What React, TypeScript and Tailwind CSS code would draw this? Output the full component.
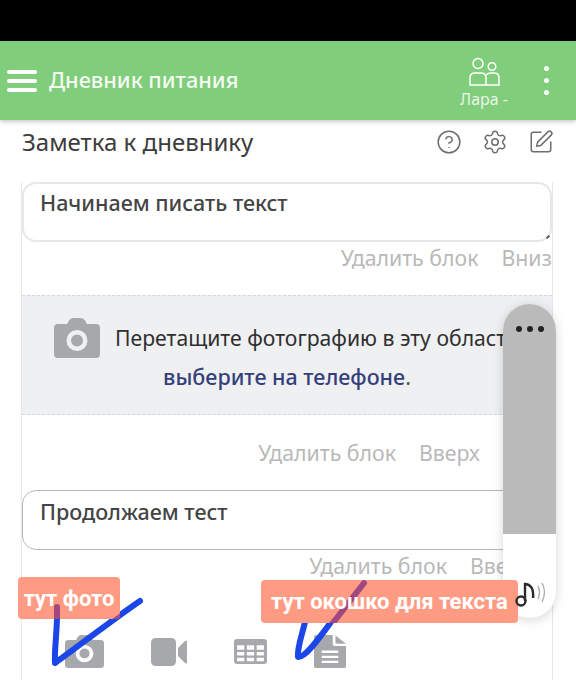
import React from "react"
import { CircleHelp, Settings, SquarePen } from "lucide-react"

function CameraIcon({ className }: { className?: string }) {
	return (
		<svg viewBox="0 0 46 40" className={className} fill="#a6a8ab" preserveAspectRatio="none">
			<path fillRule="evenodd" d="M4 6h9l2-3.500Q16.500 0 19 0h8q2.500 0 4 2.500L33 6h9q4 0 4 4v26q0 4-4 4H4q-4 0-4-4V10q0-4 4-4zM23 12a10.500 10.500 0 1 0 0 21a10.500 10.500 0 0 0 0-21zM23 16.500a6 6 0 1 1 0 12a6 6 0 0 1 0-12z" />
		</svg>
	)
}

function VideoIcon() {
	return (
		<svg viewBox="0 0 36 28" className="h-[28px] w-[36px]" fill="#a6a8ab">
			<path d="M5 0h15q5 0 5 5v18q0 5-5 5H5q-5 0-5-5V5q0-5 5-5z" />
			<path d="M27 10L34 3q2-1.500 2 1v20q0 2.500-2 1l-7-7z" />
		</svg>
	)
}

function TableIcon() {
	return (
		<svg viewBox="0 0 32 28" className="h-[25px] w-[33px]" fill="#a6a8ab" preserveAspectRatio="none">
			<path fillRule="evenodd" d="M3 0h26q3 0 3 3v22q0 3-3 3H3q-3 0-3-3V3q0-3 3-3zM3 7v5h7V7zM12.500 7v5h7V7zM22 7v5h7V7zM3 14.500v4h7v-4zM12.500 14.500v4h7v-4zM22 14.500v4h7v-4zM3 21v4h7v-4zM12.500 21v4h7v-4zM22 21v4h7v-4z" />
		</svg>
	)
}

function FileIcon() {
	return (
		<svg viewBox="0 0 29 36" className="h-[33px] w-[32px]" fill="#a6a8ab" preserveAspectRatio="none">
			<path fillRule="evenodd" d="M2 0h15v10q0 2 2 2h10v22q0 2-2 2H2q-2 0-2-2V2q0-2 2-2zM7 17v2.500h15V17zM7 22.500V25h15v-2.500zM7 28v2.500h15V28z" />
			<path d="M19.500 0.500L29 9.500h-8q-1.500 0-1.500-1.500z" />
		</svg>
	)
}

function PeopleIcon() {
	return (
		<svg viewBox="0 0 32 30" className="h-[30px] w-[32px]" fill="none" stroke="white" strokeWidth="1.500">
			<circle cx="10" cy="6.500" r="5" />
			<circle cx="24" cy="9.500" r="3.800" />
			<path d="M2 28V21q0-5 5-5h6q5 0 5 5v7z" />
			<path d="M18 18q2-2 5-2h3q5 0 5 5v7H18" />
		</svg>
	)
}

function Actions({ second, className }: { second: string; className?: string }) {
	return (
		<div className={"flex justify-end gap-[23px] whitespace-nowrap text-[21.3px] leading-[28px] text-[#b9b9b9] " + (className ?? "")}>
			<span>Удалить блок</span>
			<span>{second}</span>
		</div>
	)
}

export default function App() {
	return (
		<div className="relative h-[680px] w-[576px] overflow-hidden bg-white font-['Noto_Sans','Open_Sans',sans-serif]">
			<div className="h-[41px] bg-black" />
			<header className="relative z-10 flex h-[79px] items-center bg-[#80cd7b] pl-[7px] pr-[27px] text-white shadow-[0_2px_4px_rgba(0,0,0,0.2)]">
				<div className="flex w-[30px] flex-col gap-[5px]">
					<span className="h-[4px] rounded-full bg-white" />
					<span className="h-[4px] rounded-full bg-white" />
					<span className="h-[4px] rounded-full bg-white" />
				</div>
				<h1 className="ml-[12px] text-[21.7px] font-medium text-[#f4fbf3]">Дневник питания</h1>
				<div className="ml-auto flex w-[50px] flex-col items-center pt-[6px]">
					<PeopleIcon />
					<span className="whitespace-nowrap text-[16px] leading-[24px] text-[#eaf6e9]">Лара -</span>
				</div>
				<div className="ml-[35px] flex flex-col gap-[7px]">
					<span className="h-[5px] w-[5px] rounded-full bg-white" />
					<span className="h-[5px] w-[5px] rounded-full bg-white" />
					<span className="h-[5px] w-[5px] rounded-full bg-white" />
				</div>
			</header>
			<div className="flex h-[46px] items-center pb-[2px] pl-[22px] pr-[22px]">
				<h2 className="text-[24px] text-[#3c3c3c]">Заметка к дневнику</h2>
				<div className="ml-auto flex items-center gap-[20px] text-[#6f6f6f]">
					<CircleHelp className="h-[26px] w-[26px]" strokeWidth={1.4} />
					<Settings className="h-[26px] w-[26px]" strokeWidth={1.4} />
					<SquarePen className="h-[26px] w-[26px]" strokeWidth={1.4} />
				</div>
			</div>
			<main className="ml-[21px] mt-[16px] h-[600px] w-[532px] overflow-hidden border-x border-[#e4e6ec]">
				<div className="relative h-[60px] rounded-[14px] border-2 border-[#e6e7e9] bg-white px-[16px] pt-[3px] text-[21.5px] font-medium text-[#444]">
					Начинаем писать текст
					<span className="absolute bottom-[1px] right-[1px] h-[4px] w-[2px] rotate-45 bg-[#555]" />
				</div>
				<Actions second="Вниз" className="mt-[2px]" />
				<section className="mt-[23px] h-[120px] border-y border-dashed border-[#d5d6d9] bg-[#eff0f2] pt-[22px] text-[21.2px]">
					<div className="flex items-center whitespace-nowrap pl-[32px] text-[#2f2f2f]">
						<CameraIcon className="h-[40px] w-[46px]" />
						<span className="ml-[15px]">Перетащите фотографию в эту область</span>
					</div>
					<p className="mt-[2px] text-center text-[21.5px] leading-[34px] font-medium text-[#35407b]">
						выберите на телефоне<span className="font-normal text-[#555]">.</span>
					</p>
				</section>
				<Actions second="Вверх" className="mt-[24px] pr-[72px]" />
				<div className="mt-[23px] h-[60px] w-[560px] rounded-[14px] border border-[#b8b8b8] bg-white px-[17px] pt-[5px] text-[21.5px] font-medium text-[#444]">Продолжаем тест</div>
				<Actions second="Вверх" className="mt-[2px] pr-[21px]" />
				<div className="mt-[55px] flex h-[33px] items-center gap-[47px] pl-[43px]">
					<CameraIcon className="h-[33px] w-[39px]" />
					<VideoIcon />
					<TableIcon />
					<FileIcon />
				</div>
			</main>

			{/* плавающая панель громкости */}
			<div className="absolute left-[503px] top-[304px] z-20 flex h-[314px] w-[53px] flex-col overflow-hidden rounded-full bg-white shadow-[0_2px_12px_rgba(0,0,0,0.16)]">
				<div className="flex h-[230px] justify-center gap-[5px] bg-[#bababa] pt-[22px]">
					<span className="h-[6px] w-[6px] rounded-full bg-[#222]" />
					<span className="h-[6px] w-[6px] rounded-full bg-[#222]" />
					<span className="h-[6px] w-[6px] rounded-full bg-[#222]" />
				</div>
			</div>

			{/* галочки от руки, уходят под наклейки */}
			<svg className="absolute inset-0 z-[25] h-[680px] w-[576px]" viewBox="0 0 576 680" fill="none" stroke="#1b46e8" strokeWidth="6" strokeLinecap="round" strokeLinejoin="round">
				<path d="M57 607C58 625 54 650 55 663C80 645 115 618 140 601" />
				<path d="M305 622C302 635 297 648 298 657C305 658 318 640 331 622" />
			</svg>

			{/* наклейки поверх скриншота */}
			<div className="absolute left-[18px] top-[577px] z-30 flex h-[42px] w-[102px] items-center justify-center overflow-hidden rounded-[4px] bg-[#ff9b83] font-['Roboto',sans-serif] text-[22px] font-bold text-white">
				<svg className="absolute inset-0 h-[42px] w-[102px]" viewBox="0 0 102 42" fill="none" stroke="#a0487f" strokeWidth="6" strokeLinecap="round">
					<path d="M39 30V46" />
					<path d="M106 37L94 46" />
				</svg>
				<span className="relative">тут фото</span>
			</div>
			<div className="absolute left-[261px] top-[580px] z-30 flex h-[43px] w-[257px] items-center justify-center overflow-hidden rounded-[4px] bg-[#ff9b83] font-['Roboto',sans-serif] text-[22px] font-bold whitespace-nowrap text-white">
				<svg className="absolute inset-0 h-[43px] w-[257px]" viewBox="0 0 257 43" fill="none" stroke="#a0487f" strokeWidth="6" strokeLinecap="round">
					<path d="M103 3L68 48" />
				</svg>
				<span className="relative">тут окошко для текста</span>
			</div>
			<svg className="absolute left-[510px] top-[574px] z-40 h-[36px] w-[40px]" viewBox="0 0 40 36" fill="none" stroke="#2b2b2b">
				<circle cx="11" cy="27" r="4.500" strokeWidth="2.400" />
				<path d="M15 27V10c5 0 9 4 8 14" strokeWidth="2.400" />
				<path d="M28 12q3 6 0 13M32 9q5 9 0 19" stroke="#a8a8a8" strokeWidth="1.300" />
			</svg>
		</div>
	)
}
